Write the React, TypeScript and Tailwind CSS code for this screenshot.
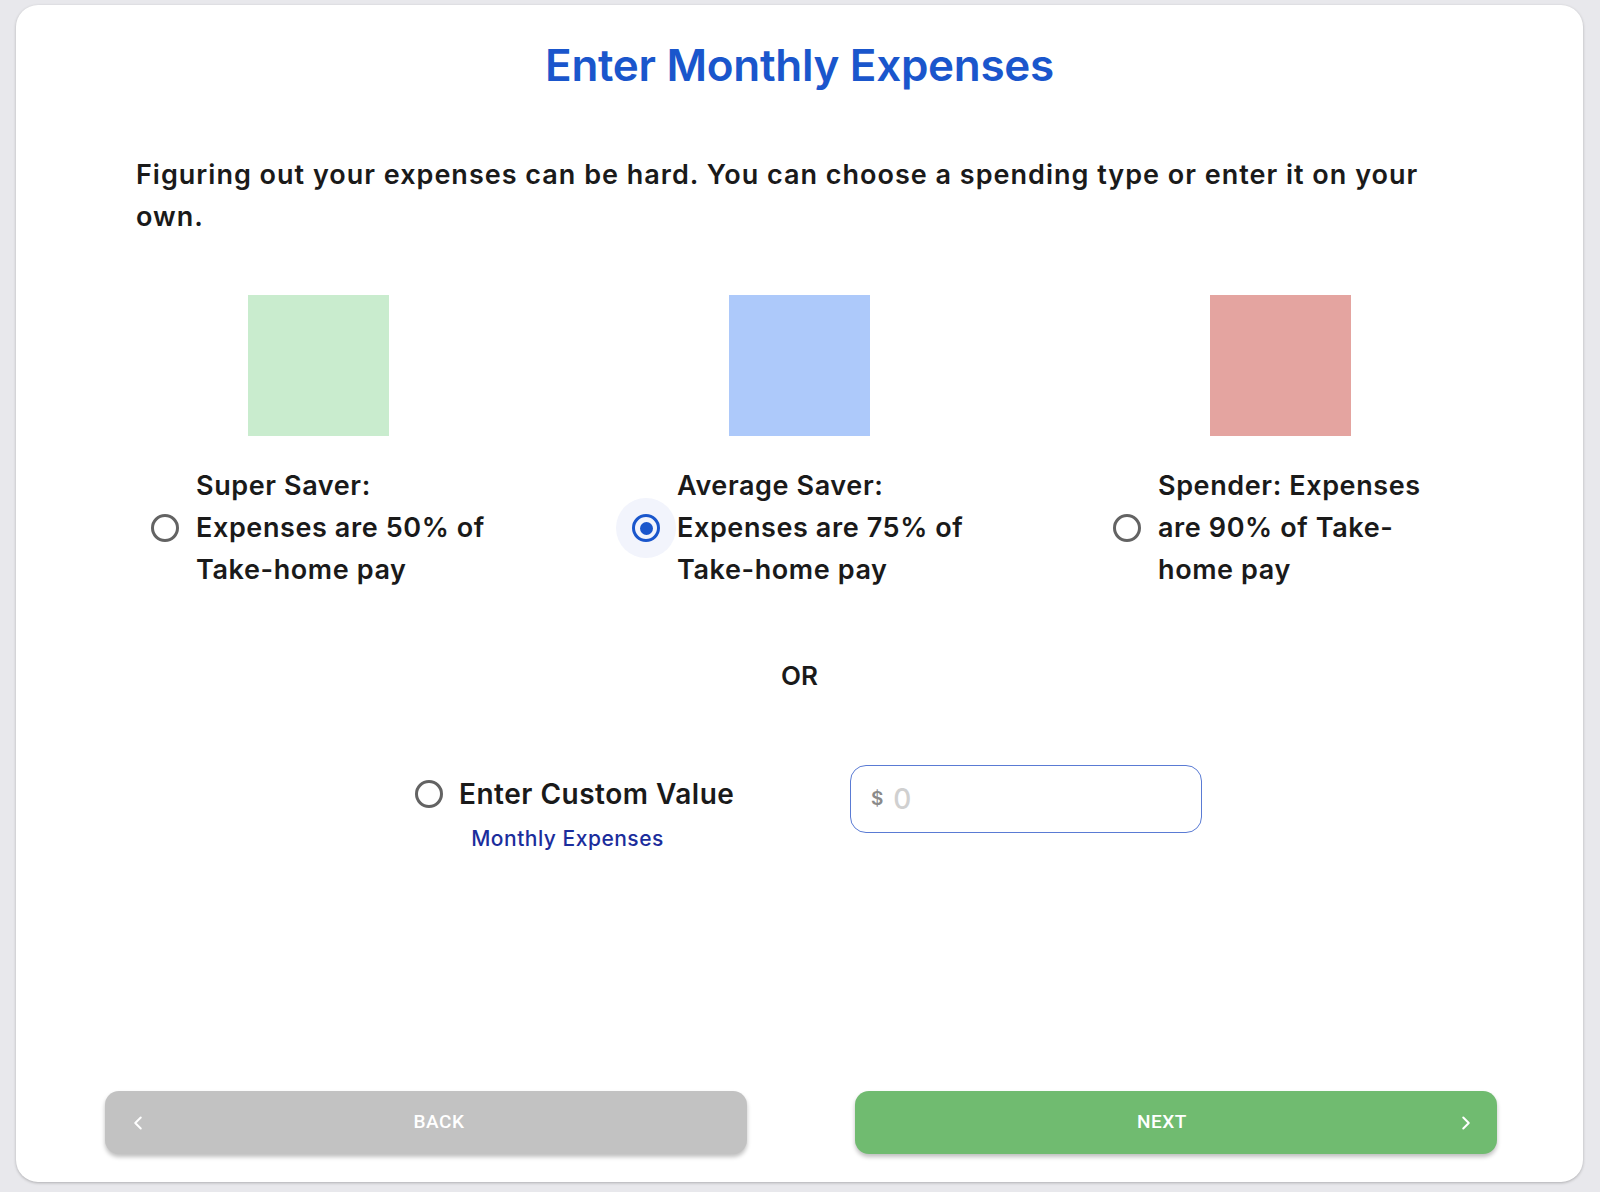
import React from 'react';

const font = { fontFamily: 'Inter, "Noto Sans", sans-serif' };

const Radio: React.FC<{ checked?: boolean }> = ({ checked }) => (
  <span
    className={`w-[60px] h-[60px] shrink-0 rounded-full flex items-center justify-center ${
      checked ? 'bg-[#f2f4fc]' : ''
    }`}
  >
    <span
      className={`w-[28px] h-[28px] rounded-full border-[3px] flex items-center justify-center ${
        checked ? 'border-[#1a56cc]' : 'border-[#636363]'
      }`}
    >
      {checked && <span className="w-[13px] h-[13px] rounded-full bg-[#1a56cc]" />}
    </span>
  </span>
);

const options = [
  { color: 'bg-[#c9ecce]', lines: ['Super Saver:', 'Expenses are 50% of', 'Take-home pay'], checked: false },
  { color: 'bg-[#adc9fa]', lines: ['Average Saver:', 'Expenses are 75% of', 'Take-home pay'], checked: true },
  { color: 'bg-[#e4a4a0]', lines: ['Spender: Expenses', 'are 90% of Take-', 'home pay'], checked: false },
];

export default function App() {
  return (
    <div className="min-h-screen bg-[#e8e8ec] pl-[16px] pr-[17px] pt-[5px] pb-[10px]" style={font}>
      <div className="bg-white rounded-[22px] h-[1177px] shadow-[0_1px_3px_rgba(0,0,0,0.25)] flex flex-col">
        <h1 className="text-center text-[#1a56cc] text-[44px] leading-[54px] font-semibold tracking-[-0.3px] pt-[33px]">
          Enter Monthly Expenses
        </h1>

        <p className="ml-[120px] mr-[140px] mt-[62px] text-[27px] leading-[42px] font-semibold text-[#1a1a1a] tracking-[1px]">
          Figuring out your expenses can be hard. You can choose a spending type or enter it on your own.
        </p>

        <div className="grid grid-cols-3 mx-[62px] mt-[57px]">
          {options.map((o, i) => (
            <div key={i} className="flex flex-col items-center">
              <div className={`w-[141px] h-[141px] ${o.color}`} />
              <div className="flex items-center mt-[29px] ml-[-6px]">
                <Radio checked={o.checked} />
                <div className="w-[300px] ml-[1px] text-[27px] leading-[42px] font-semibold text-[#1a1a1a] tracking-[0.6px]">
                  {o.lines.map((l) => (
                    <div key={l} className="whitespace-nowrap">{l}</div>
                  ))}
                </div>
              </div>
            </div>
          ))}
        </div>

        <div className="text-center mt-[64px] text-[26px] leading-[42px] font-semibold text-[#1a1a1a]">OR</div>

        <div className="flex items-start mt-[67px] ml-[383px]">
          <div className="flex flex-col items-center w-[451px]">
            <div className="flex items-center self-start">
              <Radio />
              <span className="text-[28px] leading-[60px] font-semibold text-[#1a1a1a] whitespace-nowrap tracking-[0.5px]">Enter Custom Value</span>
            </div>
            <span className="text-[21px] leading-[28px] font-medium text-[#1b2d9c] mt-[1px] mr-[114px] tracking-[0.5px]">Monthly Expenses</span>
          </div>
          <div className="w-[352px] h-[68px] mt-[1px] rounded-[16px] border border-[#5a7bd4] flex items-center pl-[20px]">
            <span className="text-[19px] font-semibold text-[#8a8a8a] mr-[10px]">$</span>
            <span className="text-[28px] font-medium text-[#d0d0d0]">0</span>
          </div>
        </div>

        <div className="mt-auto mb-[28px] grid grid-cols-2 gap-[108px] ml-[89px] mr-[86px]">
          <button className="relative h-[63px] rounded-[14px] bg-[#c2c2c2] shadow-[0_3px_4px_rgba(0,0,0,0.25)] flex items-center justify-center pl-[26px] text-white text-[19px] font-medium tracking-[0.5px]" style={{ fontFamily: 'Roboto, sans-serif' }}>
            <svg className="absolute left-[22px]" width="22" height="22" viewBox="0 0 24 24" fill="none" stroke="currentColor" strokeWidth="2.2" strokeLinecap="round" strokeLinejoin="round"><polyline points="15 18 9 12 15 6" /></svg>
            BACK
          </button>
          <button className="relative h-[63px] rounded-[14px] bg-[#70bb70] shadow-[0_3px_4px_rgba(0,0,0,0.25)] flex items-center justify-center pr-[28px] text-white text-[19px] font-medium tracking-[0.5px]" style={{ fontFamily: 'Roboto, sans-serif' }}>
            NEXT
            <svg className="absolute right-[20px]" width="22" height="22" viewBox="0 0 24 24" fill="none" stroke="currentColor" strokeWidth="2.2" strokeLinecap="round" strokeLinejoin="round"><polyline points="9 18 15 12 9 6" /></svg>
          </button>
        </div>
      </div>
    </div>
  );
}
